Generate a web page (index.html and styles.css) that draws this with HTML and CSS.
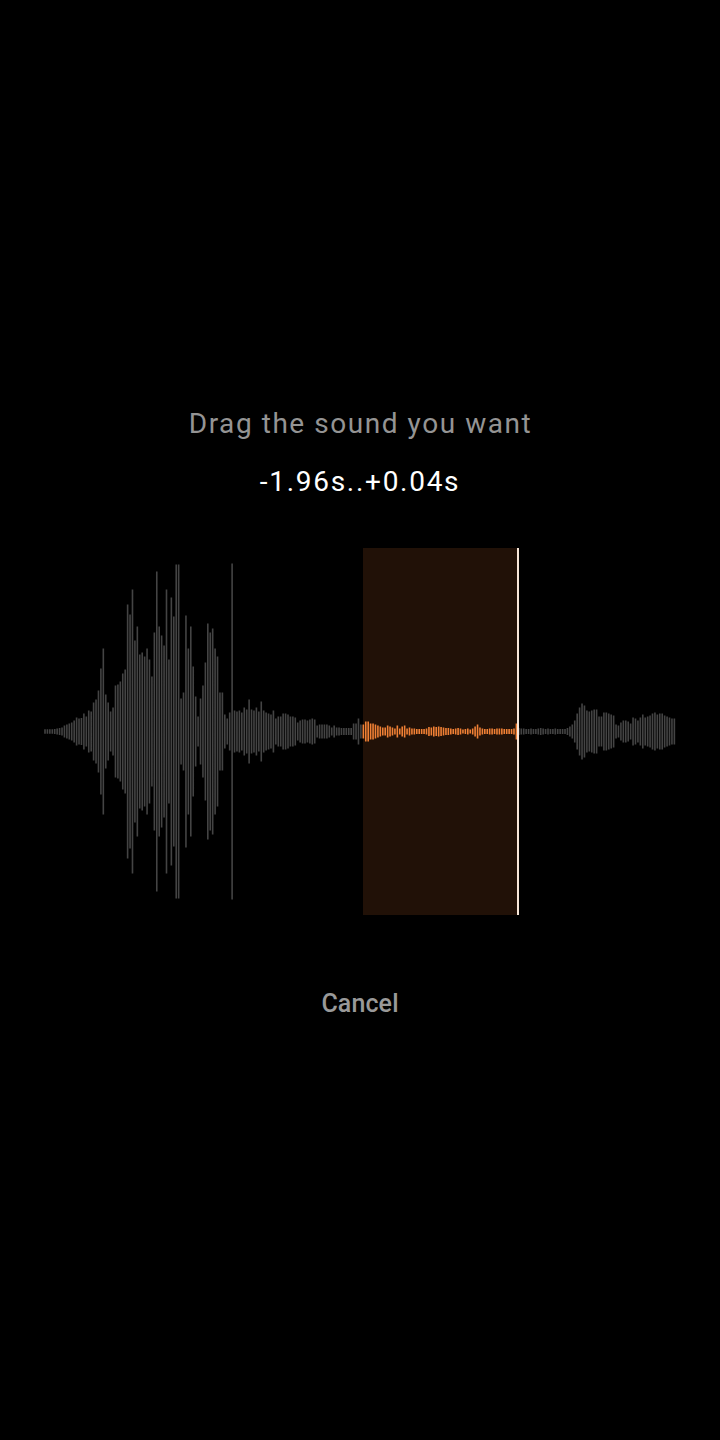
FILE: index.html
```html
<!DOCTYPE html>
<html lang="en">
<head>
<meta charset="utf-8">
<title>Drag the sound you want</title>
<link rel="stylesheet" href="styles.css">
</head>
<body>
<main class="screen">
  <h1 class="prompt">Drag the sound you want</h1>
  <p class="range">-1.96s..+0.04s</p>
  <svg class="wave" viewBox="0 0 720 367" width="720" height="367" aria-hidden="true">
    <rect class="selection" x="363" y="0" width="154" height="367"></rect>
    <path id="bars-idle" class="bars-idle"></path>
    <path id="bars-active" class="bars-active"></path>
    <rect class="cursor" x="517" y="0" width="2" height="367"></rect>
  </svg>
  <button class="cancel" type="button">Cancel</button>
</main>
<script src="wave.js"></script>
</body>
</html>
```
FILE: styles.css
```css
html, body {
  margin: 0;
  background: #000;
}
.screen {
  width: 720px;
  height: 1440px;
  display: flex;
  flex-direction: column;
  align-items: center;
  padding-top: 406px;
  box-sizing: border-box;
  font-family: Roboto, "Liberation Sans", sans-serif;
}
.prompt {
  margin: 0 0 0 1px;
  font-size: 28px;
  line-height: 36px;
  font-weight: 400;
  letter-spacing: 1.55px;
  color: #949494;
}
.range {
  margin: 22px 0 0;
  font-size: 28px;
  line-height: 36px;
  letter-spacing: 1.72px;
  color: #fff;
}
.wave {
  display: block;
  margin-top: 48px;
}
.selection { fill: #211107; }
.cursor { fill: #f7e6d8; }
.bars-idle, .bars-active {
  fill: none;
  stroke-width: 1.6;
}
.bars-idle { stroke: #444; }
.bars-active { stroke: #f08035; }
.cancel {
  margin-top: 71px;
  padding: 0;
  border: 0;
  background: none;
  font-family: inherit;
  font-size: 25px;
  line-height: 36px;
  font-weight: 500;
  letter-spacing: 0.12px;
  color: #999;
}
```
FILE: wave.js
```js
var heights = [
  2.3,2.3,2.3,2.3,2.5,3,3.5,4,6,7,8,9,11,14,13,13.5,18,15,21,20,
  29,32,41,63,83,37,29,20,24,46,47,50,58,62,127,117,142,91,105,77,
  79,75,83,72,55,99,160,105,96,86,142,72,134,115,167,167,33,39,116,83,
  105,65,35,15,33,46,69,108,99,103,83,75,39,39,17,13,19,168,
  21,20,21,19,24,22,32,22,21,24,20,30,21,19,18,17,21,13,15,15,18,18,17,15,15,14,
  9,11,12,12,11,12,13,12,6,7,7,7,7,6,4,6,4,4,3.5,3.5,3.5,3.5,3.5,8,8,13,7,7,
  10,10,8,8,7,6,5,4,4,6,5,4,3,6,3,5,6,3,4,3,3,2.5,2.5,2.5,2.5,3,4.5,4,5,4.5,5,4.5,4,3.5,3.5,3,2.5,3,3.5,3,2,2.5,3,2,3,5,7,4,3,2.5,2.5,3,3,2.5,3,3,3,2.5,2.5,2.5,2.5,3,8,
  3.5,3,3,2.5,2.5,3,2.5,2.5,3,3.5,3,2.5,3,2.5,2.5,3,2.5,2.5,2.5,2.5,3.5,
  5,7,11,18,24,28,26,21,20,21,22,22,15,15,19,19,18,17,16,7,6,9,11,11,10,8,14,13,11,14,17,14,15,16,18,19,17,18,18,16,15,14,13,13
];
var idle = "", active = "";
var mid = 183.5;
heights.forEach(function (h, i) {
  var x = 45 + 2.43 * i;
  var seg = "M" + x.toFixed(2) + " " + (mid - h) + "V" + (mid + h);
  if (x > 363 && x < 517) { active += seg; } else { idle += seg; }
});
document.getElementById("bars-idle").setAttribute("d", idle);
document.getElementById("bars-active").setAttribute("d", active);
```
